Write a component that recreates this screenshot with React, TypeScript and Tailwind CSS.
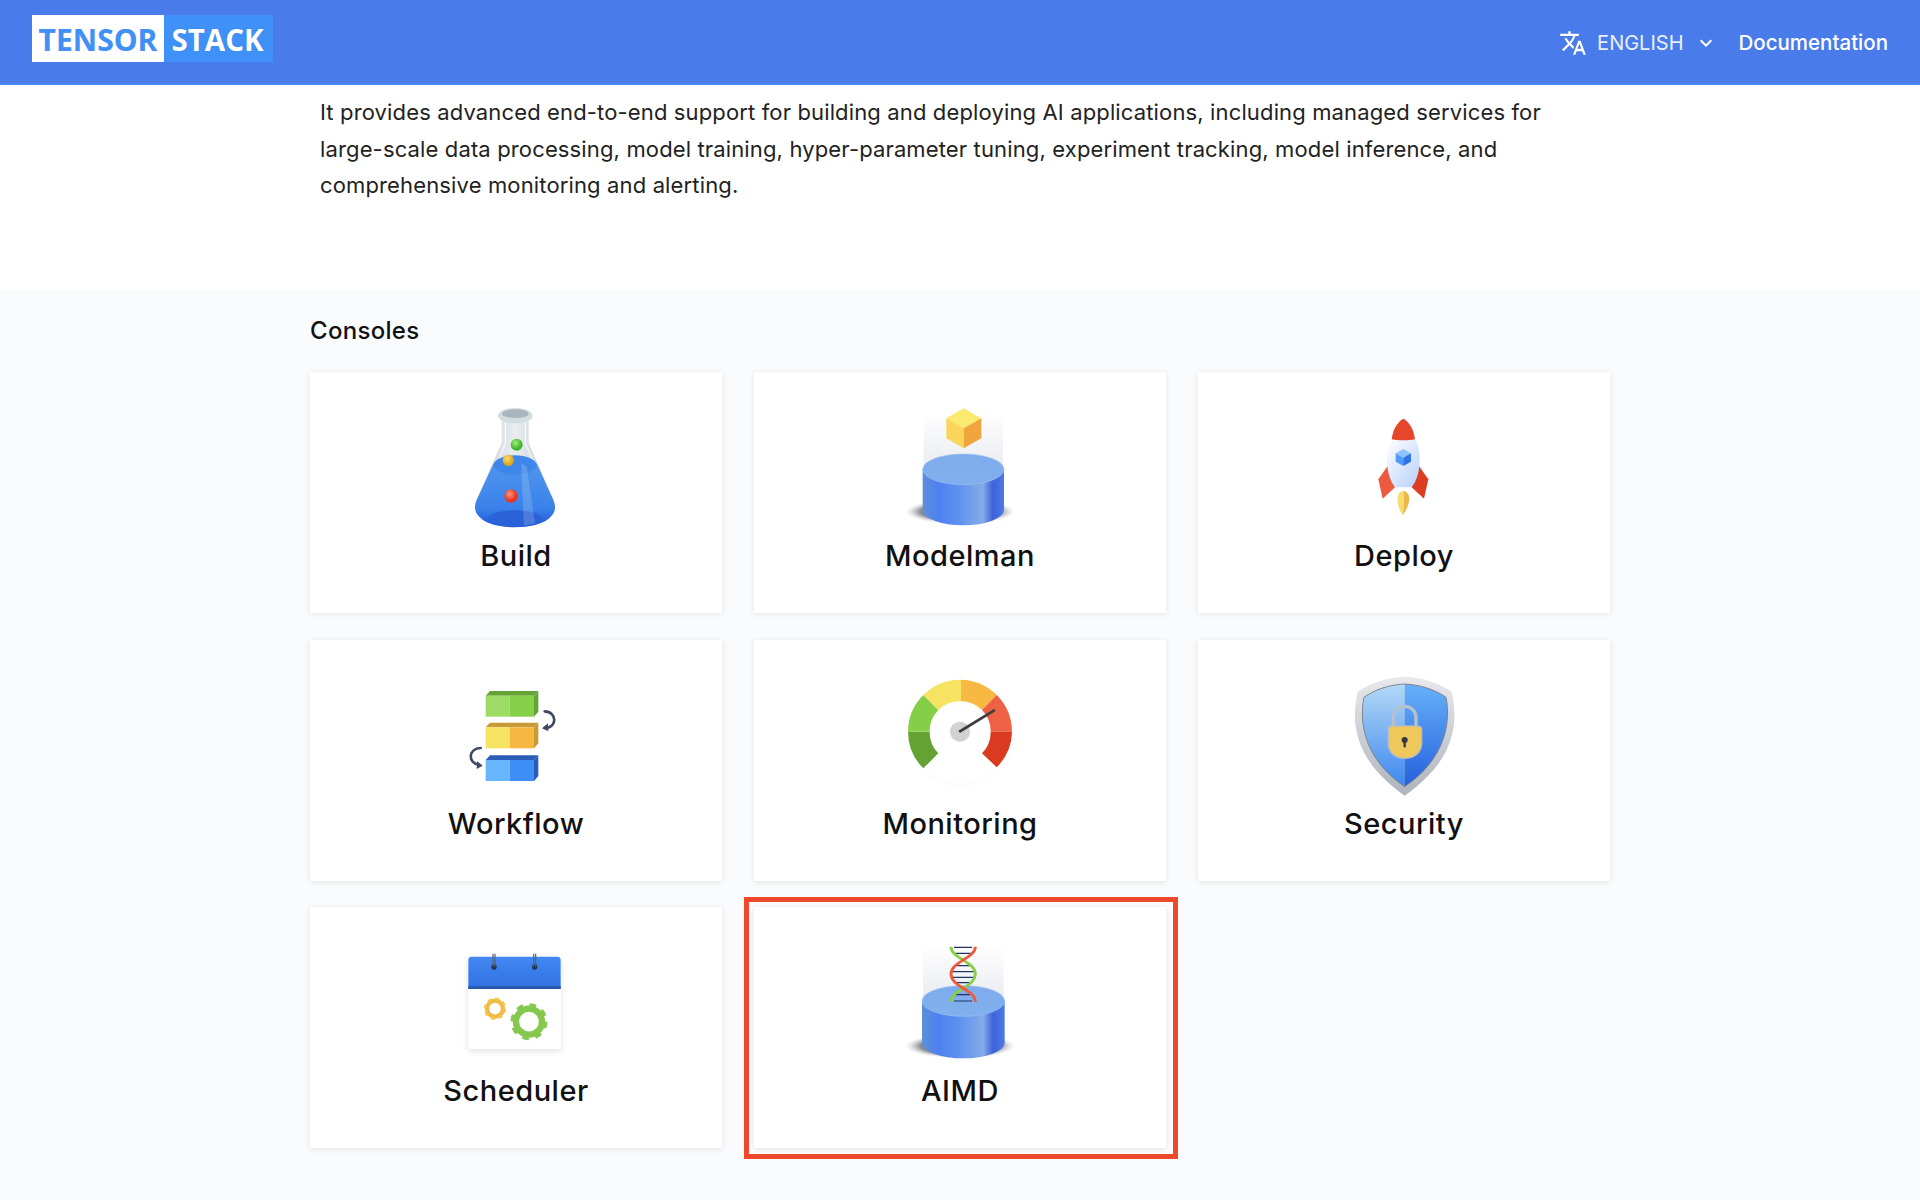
import React from "react";
import { MdTranslate, MdKeyboardArrowDown } from "react-icons/md";

const Icon = ({ vb, children }: { vb: string; children: React.ReactNode }) => (
  <svg viewBox={vb} className="w-[130px] h-[130px] block shrink-0">
    {children}
  </svg>
);

const Cylinder = ({ id, cx, top, rx, ry, h, sx, srx, sy }: { id: string; cx: number; top: number; rx: number; ry: number; h: number; sx: number; srx: number; sy: number }) => {
  const l = cx - rx;
  const r = cx + rx;
  const b = top + h;
  return (
    <>
      <defs>
        <radialGradient id={id + "s"}>
          <stop offset="0" stopColor="#555b66" />
          <stop offset="0.72" stopColor="#8a8d94" />
          <stop offset="1" stopColor="#d5d6d9" stopOpacity="0" />
        </radialGradient>
        <linearGradient id={id + "g"} x1="0" y1="0" x2="0" y2="1">
          <stop offset="0" stopColor="#ffffff" />
          <stop offset="1" stopColor="#e9ebf0" />
        </linearGradient>
        <linearGradient id={id + "b"} x1="0" y1="0" x2="1" y2="0">
          <stop offset="0" stopColor="#5c8fd8" />
          <stop offset="0.2" stopColor="#4f80f2" />
          <stop offset="0.45" stopColor="#5f92ee" />
          <stop offset="0.74" stopColor="#85ace9" />
          <stop offset="0.86" stopColor="#3d63da" />
          <stop offset="1" stopColor="#4e79e6" />
        </linearGradient>
        <linearGradient id={id + "t"} x1="0" y1="0" x2="0" y2="1">
          <stop offset="0" stopColor="#7fabec" />
          <stop offset="1" stopColor="#7fb0ee" />
        </linearGradient>
      </defs>
      <ellipse cx={sx} cy={sy} rx={srx} ry={37} fill={`url(#${id}s)`} />
      <rect x={l + 3} y={top - 170} width={rx * 2 - 6} height={170} fill={`url(#${id}g)`} />
      <path d={`M${l} ${top}V${b}A${rx} ${ry} 0 0 0 ${r} ${b}V${top}Z`} fill={`url(#${id}b)`} />
      <ellipse cx={cx} cy={top} rx={rx} ry={ry} fill={`url(#${id}t)`} stroke="#9cc0f2" strokeWidth="2" />
    </>
  );
};

const Build = () => (
  <Icon vb="93 60 390 390">
    <defs>
      <linearGradient id="fl" x1="0" y1="0" x2="0" y2="1">
        <stop offset="0" stopColor="#4f95ee" />
        <stop offset="0.7" stopColor="#3a82ea" />
        <stop offset="1" stopColor="#1f56d6" />
      </linearGradient>
      <linearGradient id="fg" x1="0" y1="0" x2="1" y2="0">
        <stop offset="0" stopColor="#c2cad0" />
        <stop offset="0.5" stopColor="#e9edf0" />
        <stop offset="1" stopColor="#bcc5cc" />
      </linearGradient>
      <radialGradient id="b1" cx="0.4" cy="0.35"><stop offset="0" stopColor="#9ff07a" /><stop offset="1" stopColor="#41b52e" /></radialGradient>
      <radialGradient id="b2" cx="0.4" cy="0.35"><stop offset="0" stopColor="#f7df6a" /><stop offset="1" stopColor="#dfa821" /></radialGradient>
      <radialGradient id="b3" cx="0.4" cy="0.35"><stop offset="0" stopColor="#fb9a7a" /><stop offset="1" stopColor="#e9321f" /></radialGradient>
    </defs>
    <path d="M245 120V188L170 360C160 385 165 400 185 415C225 450 345 450 385 415C405 400 410 385 400 360L326 188V120Z" fill="url(#fg)" />
    <path d="M256 125V190L236 240M316 125V190L338 240" fill="none" stroke="#ffffff" strokeWidth="4" opacity="0.7" />
    <path d="M221 250C240 262 330 262 350 250L400 360C410 385 405 400 385 417C345 450 225 450 185 417C165 400 160 385 170 360Z" fill="url(#fl)" />
    <ellipse cx="285" cy="255" rx="64" ry="29" fill="#3e86ea" />
    <ellipse cx="285" cy="416" rx="82" ry="25" fill="#2a62d8" />
    <path d="M303 250L320 258L345 430L312 437Z" fill="#ffffff" opacity="0.16" />
    <ellipse cx="286" cy="107" rx="52" ry="23" fill="#d3dce1" />
    <ellipse cx="286" cy="101" rx="40" ry="13" fill="#aab6bd" />
    <circle cx="290" cy="194" r="18" fill="url(#b1)" />
    <circle cx="265" cy="241" r="17" fill="url(#b2)" />
    <circle cx="273" cy="348" r="20" fill="url(#b3)" />
  </Icon>
);

const Modelman = () => (
  <Icon vb="105 60 390 390">
    <Cylinder id="mc" cx={310} top={268} rx={122} ry={46} h={122} sx={300} srx={165} sy={395} />
    <path d="M311 85L364 115L311 145L259 115Z" fill="#fbea70" />
    <path d="M259 115L311 145V205L259 175Z" fill="#fad55a" />
    <path d="M364 115L311 145V205L364 175Z" fill="#f0a53e" />
  </Icon>
);

const Deploy = () => (
  <Icon vb="87 60 390 390">
    <defs>
      <linearGradient id="rb" x1="0" y1="0" x2="1" y2="1">
        <stop offset="0" stopColor="#ffffff" />
        <stop offset="1" stopColor="#b7d0fb" />
      </linearGradient>
    </defs>
    <path d="M233 258L205 298L218 356L255 322Z" fill="#ee5a3f" />
    <path d="M327 258L355 298L342 356L305 322Z" fill="#dd3d22" />
    <path d="M280 333C258 335 256 372 278 405C284 405 280 360 280 333Z" fill="#f7dc76" />
    <path d="M280 333C304 335 304 372 278 405C284 375 280 360 280 333Z" fill="#eeb74a" />
    <path d="M245 178C224 215 226 285 255 322H305C334 285 336 215 315 178Z" fill="url(#rb)" />
    <path d="M245 178C248 150 262 125 280 116C298 125 312 150 315 178C295 182 265 182 245 178Z" fill="#e6472c" />
    <path d="M280 207L303 220L280 233L257 220Z" fill="#8fc3ff" />
    <path d="M257 220L280 233V258L257 245Z" fill="#4f9bf8" />
    <path d="M303 220L280 233V258L303 245Z" fill="#2f72ea" />
  </Icon>
);

const Block = ({ y, dark, a, b, side }: { y: number; dark: string; a: string; b: string; side: string }) => (
  <g>
    <path d={`M197 ${y + 14}L210 ${y}H355L342 ${y + 14}Z`} fill={dark} />
    <path d={`M342 ${y + 14}L355 ${y}V${y + 62}L342 ${y + 77}Z`} fill={side} />
    <rect x="197" y={y + 14} width="72" height="63" fill={a} />
    <rect x="269" y={y + 14} width="73" height="63" fill={b} />
  </g>
);

const Workflow = () => (
  <Icon vb="93 24 390 390">
    <Block y={93} dark="#66a337" side="#66a337" a="#9fdc66" b="#84d048" />
    <Block y={188} dark="#c69a35" side="#c69a35" a="#f6e362" b="#f7b740" />
    <Block y={286} dark="#2a5cb8" side="#2a5cb8" a="#67b5fb" b="#3d8ef7" />
    <g fill="none" stroke="#3f4a60" strokeWidth="8" strokeLinecap="round">
      <path d="M374 154C412 155 412 204 376 204" />
      <path d="M182 264C143 265 143 311 179 315" />
    </g>
    <path d="M366 205L384 190L385 214Z" fill="#3f4a60" />
    <path d="M188 317L171 303L170 327Z" fill="#3f4a60" />
  </Icon>
);

const Monitoring = () => (
  <Icon vb="105 24 390 390">
    <defs>
      <radialGradient id="gs"><stop offset="0.8" stopColor="#f4f4f5" /><stop offset="1" stopColor="#ffffff" /></radialGradient>
    </defs>
    <circle cx="300" cy="222" r="162" fill="url(#gs)" />
    <circle cx="300" cy="215" r="156" fill="#ffffff" />
    <path d="M144 215H209A91 91 0 0 0 235 280L190 325A156 156 0 0 1 144 215Z" fill="#65a234" />
    <path d="M144 215H209A91 91 0 0 1 235 150L190 105A156 156 0 0 0 144 215Z" fill="#85cf48" />
    <path d="M190 105L235 150A91 91 0 0 1 303 124V59A156 156 0 0 0 190 105Z" fill="#f6e362" />
    <path d="M303 59V124A91 91 0 0 1 366 150L410 105A156 156 0 0 0 303 59Z" fill="#f7b941" />
    <path d="M410 105L366 150A91 91 0 0 1 392 215H456A156 156 0 0 0 410 105Z" fill="#ef6144" />
    <path d="M392 215H456A156 156 0 0 1 410 322L366 280A91 91 0 0 0 392 215Z" fill="#d93a20" />
    <circle cx="300" cy="215" r="30" fill="#d1d2d4" />
    <path d="M295 212L403 146L406 154L300 219Z" fill="#3c3c3c" />
  </Icon>
);

const Security = () => (
  <Icon vb="87 24 390 390">
    <defs>
      <linearGradient id="sh" x1="0" y1="0" x2="0" y2="1">
        <stop offset="0" stopColor="#e8e9ec" />
        <stop offset="1" stopColor="#aeb3bd" />
      </linearGradient>
      <linearGradient id="sl" x1="0" y1="0" x2="0" y2="1">
        <stop offset="0" stopColor="#b4d9f6" />
        <stop offset="1" stopColor="#3c87ef" />
      </linearGradient>
      <linearGradient id="sr" x1="0" y1="0" x2="0" y2="1">
        <stop offset="0" stopColor="#66b1f9" />
        <stop offset="1" stopColor="#2560dc" />
      </linearGradient>
    </defs>
    <path d="M284 50C230 52 180 70 143 95C122 190 132 300 284 407C436 300 446 190 425 95C388 70 338 52 284 50Z" fill="url(#sh)" />
    <path d="M284 72C240 74 195 88 162 112C146 190 165 300 284 380V72Z" fill="url(#sl)" />
    <path d="M284 72C328 74 375 88 408 112C424 190 403 300 284 380V72Z" fill="url(#sr)" />
    <path d="M284 72C240 74 195 88 162 112C146 190 165 300 284 380C403 300 424 190 408 112C375 88 328 74 284 72Z" fill="none" stroke="#80848c" strokeWidth="3" />
    <path d="M250 200V175C250 127 318 127 318 175V200" fill="none" stroke="#b5c0d0" strokeWidth="10" />
    <path d="M245 198H323C330 198 335 203 335 210V250C335 280 310 295 284 295C258 295 235 280 235 250V210C235 203 238 198 245 198Z" fill="#eec85a" stroke="#b9bcc0" strokeWidth="4" />
    <circle cx="284" cy="240" r="9" fill="#333a46" />
    <rect x="280.5" y="240" width="7" height="22" fill="#333a46" />
  </Icon>
);

const Scheduler = () => (
  <Icon vb="93 15 390 390">
    <defs>
      <linearGradient id="ct" x1="0" y1="0" x2="0" y2="1">
        <stop offset="0" stopColor="#4388f2" />
        <stop offset="1" stopColor="#2e70e0" />
      </linearGradient>
      <filter id="cs" x="-20%" y="-20%" width="140%" height="140%"><feDropShadow dx="0" dy="6" stdDeviation="9" floodColor="#000" floodOpacity="0.12" /></filter>
    </defs>
    <rect x="145" y="80" width="277" height="277" rx="10" fill="#ffffff" filter="url(#cs)" />
    <path d="M155 80H412A10 10 0 0 1 422 90V177H145V90A10 10 0 0 1 155 80Z" fill="url(#ct)" />
    <rect x="145" y="168" width="277" height="9" fill="#2a58ae" />
    <circle cx="222" cy="111" r="8" fill="#23324d" />
    <circle cx="344" cy="111" r="8" fill="#23324d" />
    <path d="M219 71V110M225 71V110M341 71V110M347 71V110" stroke="#55606e" strokeWidth="3.5" />
    <circle cx="225" cy="236" r="24" fill="none" stroke="#f0bb44" strokeWidth="13" />
    <circle cx="225" cy="236" r="29" fill="none" stroke="#f2c648" strokeWidth="9" strokeDasharray="11.4 11.4" />
    <circle cx="327" cy="275" r="39" fill="none" stroke="#85c84e" strokeWidth="19" />
    <circle cx="327" cy="275" r="49" fill="none" stroke="#85c84e" strokeWidth="13" strokeDasharray="19.2 19.3" />
  </Icon>
);

const Aimd = () => (
  <Icon vb="495 135 390 390">
    <Cylinder id="ac" cx={700} top={333} rx={124} ry={46} h={126} sx={690} srx={165} sy={468} />
    <g stroke="#20365f" strokeWidth="3.5">
      <path d="M672 172H726M676 190H722M690 206H708M678 227H720M667 245H732M667 262H732M678 278H720M690 296H708M678 314H720M672 333H726" />
    </g>
    <path d="M663 170C663 205 736 215 736 252C736 290 663 300 663 335" fill="none" stroke="#86cf46" strokeWidth="8.5" />
    <path d="M736 170C736 205 663 215 663 252C663 290 736 300 736 335" fill="none" stroke="#ee5a3c" strokeWidth="8.5" />
  </Icon>
);

const cards: { name: string; icon: React.ReactNode; mark?: boolean }[] = [
  { name: "Build", icon: <Build /> },
  { name: "Modelman", icon: <Modelman /> },
  { name: "Deploy", icon: <Deploy /> },
  { name: "Workflow", icon: <Workflow /> },
  { name: "Monitoring", icon: <Monitoring /> },
  { name: "Security", icon: <Security /> },
  { name: "Scheduler", icon: <Scheduler /> },
  { name: "AIMD", icon: <Aimd />, mark: true },
];

export default function App() {
  return (
    <div className="min-h-[1200px] bg-white text-[#111] font-['Inter','Liberation_Sans',sans-serif]">
      <header className="h-[85px] bg-[#4a7bea] border-b-2 border-[#4c86f2] pl-8 pr-8 flex items-center justify-between">
        <div className="flex h-[47px] font-['Open_Sans',sans-serif] font-bold text-[30px] leading-[49px] mt-[-6px] [text-shadow:0_0_1px_rgba(0,0,0,0.15)]">
          <div className="w-[132px] bg-white text-[#3f90f7] text-center">TENSOR</div>
          <div className="w-[109px] bg-[#3f90f7] text-white text-[29.5px] text-center pr-[2px]">STACK</div>
        </div>
        <div className="flex items-center text-white mt-[3px]">
          <MdTranslate className="text-[28px]" />
          <span className="ml-[10px] text-[20px] text-[#e8f0ff]">ENGLISH</span>
          <MdKeyboardArrowDown className="text-[24px] ml-[10px]" />
          <span className="ml-[21px] text-[20.5px] font-medium">Documentation</span>
        </div>
      </header>
      <section className="h-[204px] pt-[9px]">
        <div className="w-[1260px] ml-[320px] text-[22px] tracking-[0.14px] leading-[36.6px] text-[#222]">
          <p>
            It provides advanced end-to-end support for building and deploying AI applications, including managed services for
            <br />
            large-scale data processing, model training, hyper-parameter tuning, experiment tracking, model inference, and
            <br />
            comprehensive monitoring and alerting.
          </p>
        </div>
      </section>
      <section className="bg-[#fafbfd] h-[911px] pt-6 pl-[310px]">
        <h2 className="text-[24px] tracking-[0.3px] leading-9 font-medium text-[#111] mb-[23px]">Consoles</h2>
        <div className="grid grid-cols-[412px_412px_412px] gap-x-8 gap-y-[26.5px] w-[1300px]">
          {cards.map((c) => (
            <div key={c.name} className="relative h-[241px] bg-white shadow-[0_1px_6px_rgba(0,0,0,0.1)] flex flex-col items-center pt-7">
              {c.icon}
              <div className="text-[29px] leading-9 font-medium mt-[8px] tracking-[0.5px]">{c.name}</div>
              {c.mark && <div className="absolute top-[-10px] left-[-10px] right-[-12px] bottom-[-11px] border-[5px] border-[#f0482a]" />}
            </div>
          ))}
        </div>
      </section>
    </div>
  );
}
